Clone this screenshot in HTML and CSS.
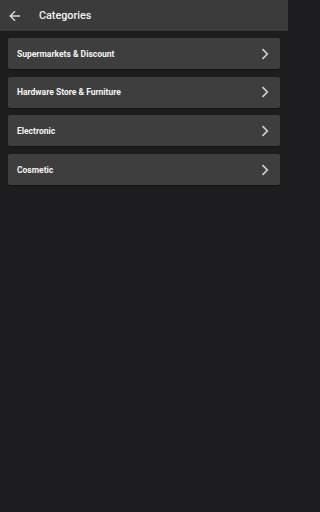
FILE: index.html
```html
<!DOCTYPE html>
<html>
<head>
<meta charset="utf-8">
<meta name="viewport" content="width=288">
<link rel="stylesheet" href="styles.css">
</head>
<body>
<div class="screen">
<header class="appbar">
  <svg class="back" width="12" height="12" viewBox="0 0 12 12"><path d="M11 6H1.5M6 1.2L1.2 6 6 10.8" fill="none" stroke="#d8d8d8" stroke-width="1.4"/></svg>
  <span class="title">Categories</span>
</header>
<main class="list">
  <div class="item"><span>Supermarkets &amp; Discount</span><svg class="chev" width="8" height="12" viewBox="0 0 8 12"><path d="M1.5 1.2L6.3 6 1.5 10.8" fill="none" stroke="#cfcfcf" stroke-width="1.7"/></svg></div>
  <div class="item"><span>Hardware Store &amp; Furniture</span><svg class="chev" width="8" height="12" viewBox="0 0 8 12"><path d="M1.5 1.2L6.3 6 1.5 10.8" fill="none" stroke="#cfcfcf" stroke-width="1.7"/></svg></div>
  <div class="item"><span>Electronic</span><svg class="chev" width="8" height="12" viewBox="0 0 8 12"><path d="M1.5 1.2L6.3 6 1.5 10.8" fill="none" stroke="#cfcfcf" stroke-width="1.7"/></svg></div>
  <div class="item"><span>Cosmetic</span><svg class="chev" width="8" height="12" viewBox="0 0 8 12"><path d="M1.5 1.2L6.3 6 1.5 10.8" fill="none" stroke="#cfcfcf" stroke-width="1.7"/></svg></div>
</main>
</div>
</body>
</html>
```
FILE: styles.css
```css
html, body {
  margin: 0;
  padding: 0;
  background: #1d1d1f;
  height: 100%;
}
body {
  font-family: Roboto, "Liberation Sans", sans-serif;
  color: #fff;
}
.screen {
  width: 288px;
  height: 512px;
  background: #1d1d1f;
}
.appbar {
  height: 31px;
  background: #3b3b3b;
  display: flex;
  align-items: center;
  padding-left: 9px;
  box-sizing: border-box;
}
.back {
  display: block;
  margin-right: 18px;
}
.title {
  font-size: 10.8px;
  font-weight: 500;
  color: #f2f2f2;
}
.list {
  display: flex;
  flex-direction: column;
  gap: 7.7px;
  padding: 7px 8px 0 8px;
}
.item {
  height: 31px;
  background: #3e3e3f;
  border-radius: 2px;
  display: flex;
  align-items: center;
  justify-content: space-between;
  padding: 0 11px 0 9px;
  box-sizing: border-box;
  box-shadow: 0 1px 1px rgba(0,0,0,0.3);
}
.item span {
  font-size: 8.5px;
  font-weight: 700;
  color: #f4f4f4;
}
.chev {
  display: block;
}
```
